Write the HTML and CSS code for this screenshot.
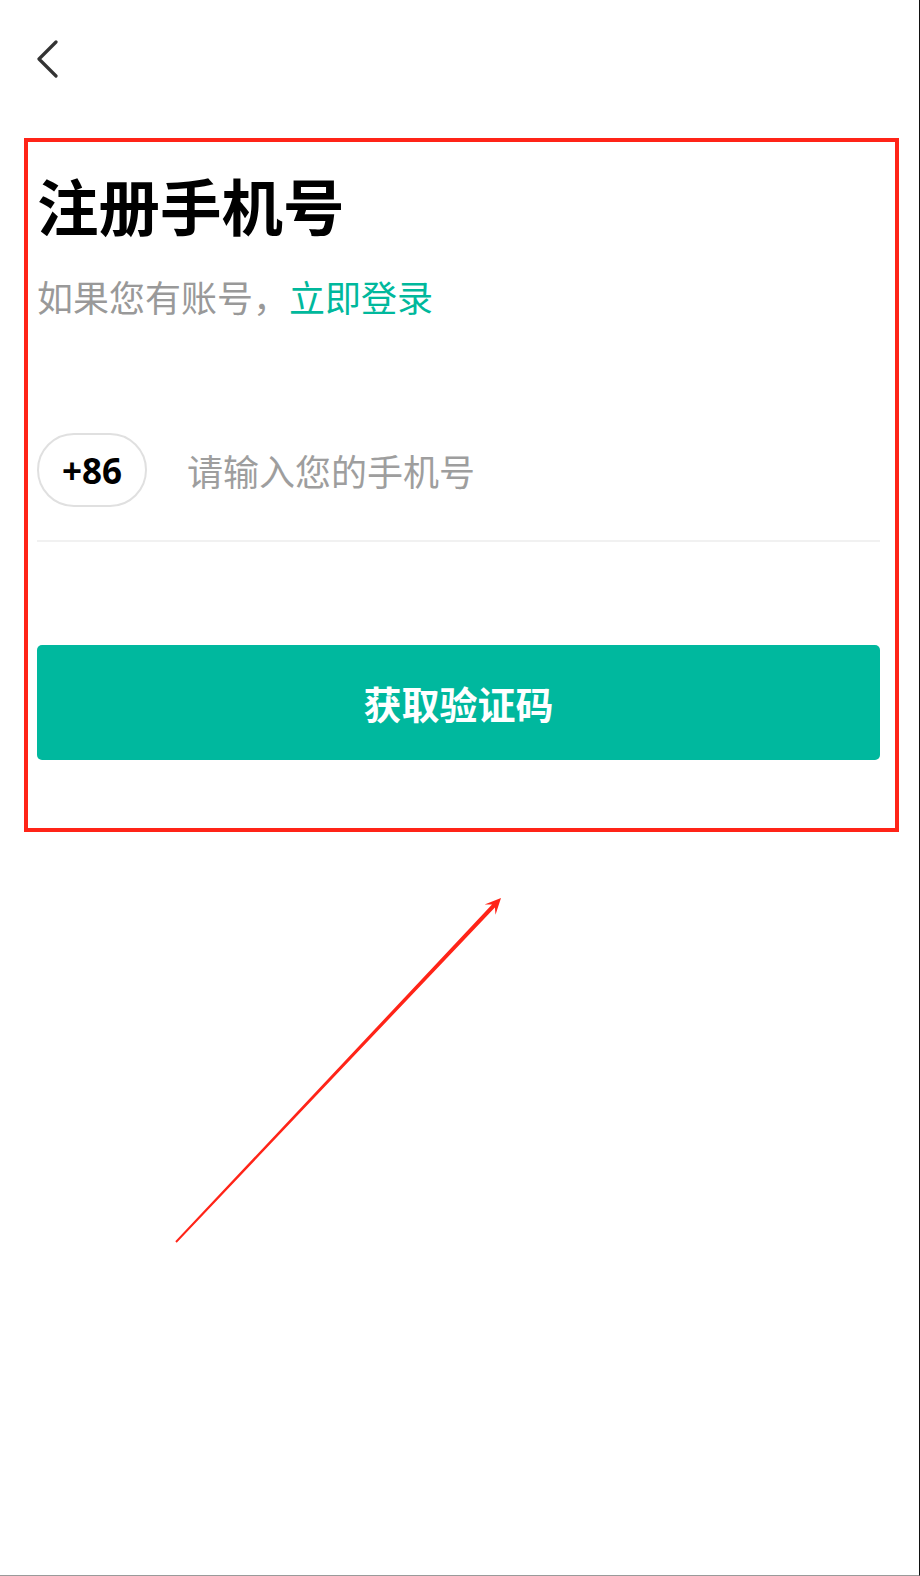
FILE: index.html
```html
<!DOCTYPE html>
<html lang="zh-CN">
<head>
<meta charset="utf-8">
<title>注册手机号</title>
<link rel="stylesheet" href="styles.css">
</head>
<body>
<div class="page">
  <header class="topbar">
    <button class="back" aria-label="返回">
      <svg width="24" height="38" viewBox="0 0 24 38"><path d="M20 2 L3 19 L20 36" fill="none" stroke="#333" stroke-width="3.2" stroke-linecap="round" stroke-linejoin="round"/></svg>
    </button>
  </header>
  <main class="content">
    <h1 class="title">注册手机号</h1>
    <p class="subtitle">如果您有账号，<a class="link">立即登录</a></p>
    <div class="phone-row">
      <div class="code">+86</div>
      <div class="placeholder">请输入您的手机号</div>
    </div>
    <button class="submit">获取验证码</button>
  </main>
  <svg class="annot" width="920" height="1576" viewBox="0 0 920 1576">
    <rect x="26" y="140" width="871" height="690" fill="none" stroke="#ff2418" stroke-width="4"/>
    <polygon fill="#ff2418" points="176.7,1242.7 494.9,907.4 495.5,914.8 501,898 484.6,904.5 492.0,904.6 175.3,1241.3"/>
  </svg>
</div>
</body>
</html>
```
FILE: styles.css
```css
html, body {
  margin: 0;
  padding: 0;
  background: #fff;
}
body {
  font-family: "Noto Sans CJK SC", "Noto Sans", sans-serif;
}
.page {
  position: relative;
  width: 920px;
  height: 1576px;
  box-sizing: border-box;
  border-right: 1px solid #111;
  border-bottom: 1px solid #9a9a9a;
  overflow: hidden;
}
.topbar {
  height: 118px;
  display: flex;
  align-items: flex-start;
  padding-top: 40px;
  padding-left: 36px;
  box-sizing: border-box;
}
.back {
  border: 0;
  background: none;
  padding: 0;
  width: 24px;
  height: 38px;
  display: block;
}
.back svg { display: block; }
.content {
  padding: 0 39px 0 37px;
  display: flex;
  flex-direction: column;
}
.title {
  margin: 50px 0 0;
  font-size: 61.5px;
  line-height: 73px;
  font-weight: 700;
  color: #000;
}
.subtitle {
  margin: 30px 0 0;
  font-size: 36px;
  line-height: 50px;
  color: #999;
}
.link {
  color: #00b89c;
  text-decoration: none;
}
.phone-row {
  margin-top: 112px;
  display: flex;
  align-items: center;
  padding-bottom: 33px;
  border-bottom: 2px solid #f1f1f1;
}
.code {
  width: 110px;
  height: 74px;
  box-sizing: border-box;
  border: 2px solid #e0e0e0;
  border-radius: 37px;
  display: flex;
  align-items: center;
  justify-content: center;
  font-family: "Noto Sans", sans-serif;
  font-weight: 700;
  font-size: 35px;
  color: #000;
}
.placeholder {
  margin-left: 40px;
  font-size: 36px;
  color: #9e9e9e;
}
.submit {
  margin-top: 103px;
  height: 115px;
  border: 0;
  border-radius: 5px;
  background: #00b89e;
  color: #fff;
  font-family: "Noto Sans CJK SC", sans-serif;
  font-size: 38px;
  font-weight: 700;
}
.annot {
  position: absolute;
  top: 0;
  left: 0;
  pointer-events: none;
}
```
